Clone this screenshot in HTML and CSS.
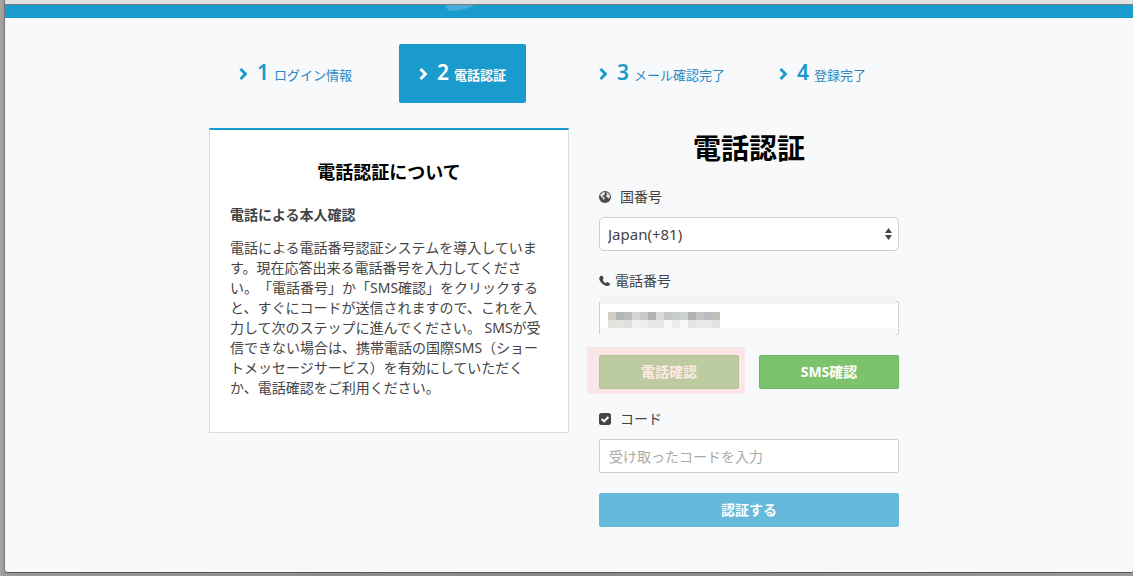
FILE: index.html
```html
<!DOCTYPE html>
<html lang="ja">
<head>
  <meta charset="UTF-8">
  <title>電話認証</title>
  <meta name="viewport" content="width=device-width, initial-scale=1.0">
  <link rel="stylesheet" href="styles.css">
</head>
<body>
  <div class="toolbar"></div>
  <div class="page">
    <header class="site-header">
      <svg class="logo" viewBox="0 0 246 13" aria-hidden="true">
        <path d="M0 0h29C23 3 14 6 7 6 2 6 0 4 0 0z" fill="#45add8"/>
      </svg>
    </header>

    <main class="container">
      <ol class="steps">
        <li><a href="#" class="step">
          <svg class="chevron" viewBox="0 0 8 12"><path d="M1.500 1L6.500 6l-5 5"/></svg>
          <span class="step-number">1</span><span>ログイン情報</span>
        </a></li>
        <li><a href="#" class="step active" aria-current="step">
          <svg class="chevron" viewBox="0 0 8 12"><path d="M1.500 1L6.500 6l-5 5"/></svg>
          <span class="step-number">2</span><span>電話認証</span>
        </a></li>
        <li><a href="#" class="step">
          <svg class="chevron" viewBox="0 0 8 12"><path d="M1.500 1L6.500 6l-5 5"/></svg>
          <span class="step-number">3</span><span>メール確認完了</span>
        </a></li>
        <li><a href="#" class="step">
          <svg class="chevron" viewBox="0 0 8 12"><path d="M1.500 1L6.500 6l-5 5"/></svg>
          <span class="step-number">4</span><span>登録完了</span>
        </a></li>
      </ol>

      <div class="columns">
        <section class="about">
          <h2>電話認証について</h2>
          <h3>電話による本人確認</h3>
          <p>電話による電話番号認証システムを導入しています。現在応答出来る電話番号を入力してください。「電話番号」か「SMS確認」をクリックすると、すぐにコードが送信されますので、これを入力して次のステップに進んでください。 SMSが受信できない場合は、携帯電話の国際SMS（ショートメッセージサービス）を有効にしていただくか、電話確認をご利用ください。</p>
        </section>

        <form class="verify">
          <h1>電話認証</h1>

          <label for="country">
            <svg class="icon" viewBox="0 0 12 12">
              <circle cx="6" cy="6" r="6" fill="#4b4b4b"/>
              <path d="M1.600 3.200L3.800 1.200 5.800 1 5.600 2.200 6.400 2.800 5 4.200 4 4.800 3.400 5.600 4.600 6 6 6.800 5.400 8 4.600 9 4 8 3.400 6.800 2 5.800 1.200 4.600zM7.400 1.200L9.400 2.200 10.800 4 11 5.800 10.200 7.400 9.400 7.600 8.800 6.400 7.400 6 6.800 5 7.600 4 8.400 3.400 7.400 2.600z" fill="#dcdddf"/>
            </svg>
            国番号
          </label>
          <div class="select-box">
            <select id="country">
              <option>Japan(+81)</option>
            </select>
            <svg class="arrows" viewBox="0 0 7 12"><path d="M0 5h7L3.500 0zM0 7h7l-3.500 5z" fill="#444"/></svg>
          </div>

          <label for="phone" class="tight">
            <svg class="icon" viewBox="0 0 12 12">
              <path d="M2.600.7C3 .5 3.300.7 3.500 1.100l1 1.900c.2.4.1.7-.2 1l-.8.7c.5 1.400 2 2.900 3.500 3.500l.8-.9c.2-.3.6-.3.9-.1l1.900 1c.4.2.5.5.4.9-.3 1.300-1.400 1.900-2.600 1.900C4.700 11 .2 6.400.2 3.300.2 2 1.300 1 2.600.7z" fill="#444"/>
            </svg>
            電話番号
          </label>
          <div class="phone-box">
            <input type="tel" id="phone">
            <div class="mask">
              <svg viewBox="0 0 112 16" shape-rendering="crispEdges" aria-hidden="true">
                <path fill="#d2cec6" d="M0 0h8v8H0z"/><path fill="#b1b5b7" d="M8 0h8v8H8z"/>
                <path fill="#bdbdbf" d="M16 0h8v8h-8z"/><path fill="#d5d5d4" d="M24 0h8v8h-8z"/>
                <path fill="#c8c8c4" d="M32 0h8v8h-8z"/><path fill="#b2b3b3" d="M40 0h8v8h-8z"/>
                <path fill="#dbdbdb" d="M48 0h8v8h-8z"/><path fill="#c5c5c6" d="M56 0h8v8h-8z"/>
                <path fill="#c7cccd" d="M64 0h8v8h-8z"/><path fill="#d1d1d0" d="M72 0h8v8h-8z"/>
                <path fill="#b2b2b4" d="M80 0h8v8h-8z"/><path fill="#c6c4c2" d="M88 0h8v8h-8z"/>
                <path fill="#b9bdc2" d="M96 0h8v8h-8z"/><path fill="#bfbebd" d="M104 0h8v8h-8z"/>
                <path fill="#e3e2dd" d="M0 8h8v8H0z"/><path fill="#e2e3e3" d="M8 8h8v8H8z"/>
                <path fill="#dfdfdf" d="M16 8h8v8h-8z"/><path fill="#f0f1f1" d="M24 8h8v8h-8z"/>
                <path fill="#efeeec" d="M32 8h8v8h-8z"/><path fill="#e7e7e7" d="M40 8h16v8h-16z"/>
                <path fill="#f7f9fb" d="M56 8h8v8h-8z"/><path fill="#ebeded" d="M64 8h8v8h-8z"/>
                <path fill="#faf9f7" d="M72 8h8v8h-8z"/><path fill="#e4e4e5" d="M80 8h8v8h-8z"/>
                <path fill="#e8e8ea" d="M88 8h16v8h-16z"/><path fill="#e1e1e1" d="M104 8h8v8h-8z"/>
              </svg>
            </div>
          </div>

          <div class="buttons">
            <div class="highlight">
              <button type="button" class="btn btn-green">電話確認</button>
            </div>
            <button type="button" class="btn btn-green">SMS確認</button>
          </div>

          <label for="code">
            <svg class="icon" viewBox="0 0 12 12">
              <rect width="12" height="12" rx="2.500" fill="#444"/>
              <path d="M2.600 6l2.400 2.400 4.400-4.400" fill="none" stroke="#fff" stroke-width="2"/>
            </svg>
            コード
          </label>
          <input type="text" id="code" placeholder="受け取ったコードを入力">

          <button type="submit" class="btn btn-blue">認証する</button>
        </form>
      </div>
    </main>
  </div>
</body>
</html>
```

FILE: styles.css
```css
* {
  box-sizing: border-box;
}
body {
  margin: 0;
  padding: 0 0 3px 4px;
  min-height: 100vh;
  display: flex;
  flex-direction: column;
  background: linear-gradient(90deg, #a6a6a6 0, #999 4px, #888 50%, #999 100%);
  font-family: "Noto Sans", "Noto Sans CJK JP", sans-serif;
  font-size: 14px;
  line-height: 20px;
  color: #444;
  text-spacing-trim: space-all;
}
h1, h2, h3, p {
  margin: 0;
}
.toolbar {
  height: 5px;
  background: #e1e1e1;
  border-bottom: 1px solid #7d7d7d;
  border-left: 1px solid #777;
}
.page {
  flex: 1;
  background: #f7f9fb;
  border-left: 1px solid #777;
  border-bottom: 1px solid #555;
  border-radius: 0 0 3px 4px;
}
.site-header {
  height: 13px;
  display: flex;
  justify-content: center;
  background: #1a9bcd;
}
.logo {
  width: 246px;
  height: 13px;
}
.container {
  max-width: 720px;
  margin: 0 auto;
  padding: 26px 0 45px;
}

/* steps */
.steps {
  display: grid;
  grid-template-columns: 180px 180px 180px auto;
  justify-items: start;
  margin: 0 0 25px;
  padding: 0 0 0 10px;
  list-style: none;
}
.step {
  display: flex;
  align-items: baseline;
  height: 59px;
  padding: 13px 20px;
  border-radius: 2px;
  font-size: 13px;
  line-height: 30px;
  white-space: nowrap;
  color: #2a87bf;
  text-decoration: none;
}
.step.active {
  background: #1a9bcd;
  color: #fff;
  font-weight: bold;
}
.chevron {
  width: 8px;
  height: 12px;
  margin-right: 10px;
  fill: none;
  stroke: #1a9bcd;
  stroke-width: 3;
}
.step-number {
  width: 12px;
  margin-right: 5px;
  font-size: 21px;
  font-weight: 600;
  color: #1a9bcd;
}
.active .chevron {
  stroke: #fff;
}
.active .step-number {
  color: #fff;
}

/* columns */
.columns {
  display: grid;
  grid-template-columns: 1fr 1fr;
  align-items: start;
}
.about {
  padding: 30px 20px 34px;
  background: #fff;
  border: 1px solid #d9dbde;
  border-top: 2px solid #1a9bcd;
}
.about h2 {
  margin-bottom: 21px;
  font-size: 18px;
  line-height: 24px;
  text-align: center;
  color: #000;
}
.about h3 {
  margin-bottom: 13px;
  font-size: 14px;
  line-height: 20px;
}
.verify {
  padding: 0 30px;
}
.verify h1 {
  margin-bottom: 19px;
  font-size: 28px;
  line-height: 40px;
  text-align: center;
  color: #000;
}
label {
  display: flex;
  align-items: center;
  gap: 9px;
  margin-bottom: 10px;
}
label.tight {
  gap: 4px;
}
.icon {
  width: 12px;
  height: 12px;
}
input, select {
  display: block;
  width: 100%;
  height: 34px;
  padding: 0 9px;
  font: inherit;
  color: #444;
  background: #fff;
  border: 1px solid #ccced4;
  border-radius: 2px;
  outline: none;
}
select {
  appearance: none;
  padding: 0 8px;
  font-size: 15px;
  border-radius: 5px;
}
input::placeholder {
  color: #aaa;
}
.select-box, .phone-box {
  position: relative;
  margin-bottom: 20px;
}
.arrows {
  position: absolute;
  top: 11px;
  right: 7px;
  width: 7px;
  height: 12px;
  pointer-events: none;
}
.mask {
  position: absolute;
  top: -5px;
  left: 1px;
  right: 3px;
  height: 40px;
  padding: 16px 8px;
  background: linear-gradient(#f2f3f5 8px, #fff 8px, #fff 32px, #f7f7f7 32px);
  line-height: 0;
}
.mask svg {
  width: 112px;
  height: 16px;
}
.buttons {
  display: grid;
  grid-template-columns: 1fr 1fr;
  gap: 20px;
  margin-bottom: 20px;
}
.btn {
  display: block;
  width: 100%;
  height: 34px;
  padding: 0;
  font: inherit;
  font-weight: bold;
  color: #fff;
  border: 1px solid;
  border-radius: 2px;
  cursor: pointer;
}
.btn-green {
  background: #7dc36e;
  border-color: #6cb35c;
}
.btn-blue {
  margin-top: 20px;
  background: #66b9da;
  border-color: #66b9da;
}
.highlight {
  position: relative;
}
.highlight::after {
  content: "";
  position: absolute;
  top: -8px;
  right: -6px;
  bottom: -5px;
  left: -12px;
  background: rgba(253, 211, 209, 0.5);
  pointer-events: none;
}
@media (max-width: 720px) {
  .steps {
    grid-template-columns: 1fr 1fr;
  }
  .columns {
    grid-template-columns: 1fr;
    gap: 25px;
  }
}
```
